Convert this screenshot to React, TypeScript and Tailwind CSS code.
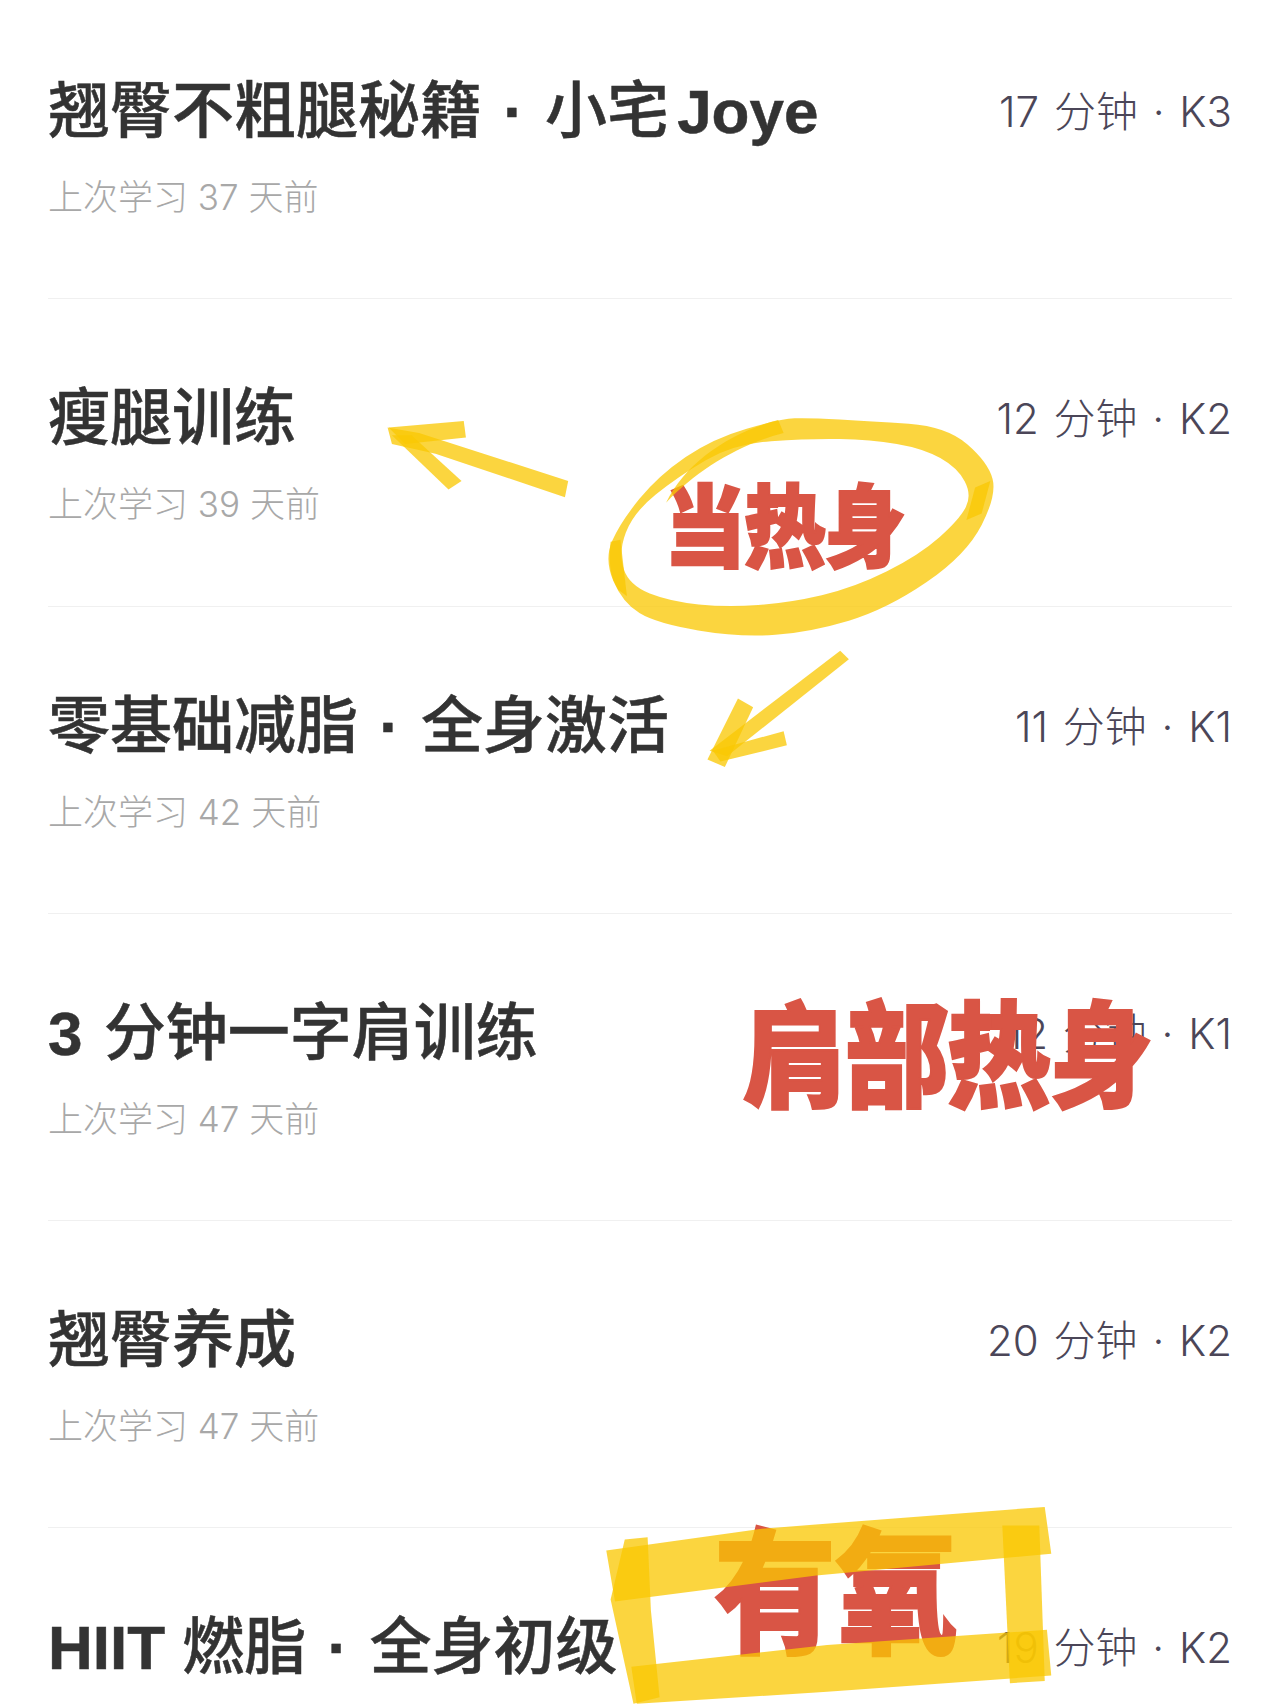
import React from 'react';

const Dot = () => <span className="mx-1 font-bold">·</span>;
const Latin = ({ children }: { children: React.ReactNode }) => <span className="font-bold">{children}</span>;

const rows = [
  {
    title: <>翘臀不粗腿秘籍 <Dot /> 小宅<span className="ml-2"><Latin>Joye</Latin></span></>,
    last: '上次学习 37 天前',
    meta: '17 分钟 · K3',
  },
  { title: <>瘦腿训练</>, last: '上次学习 39 天前', meta: '12 分钟 · K2' },
  { title: <>零基础减脂 <Dot /> 全身激活</>, last: '上次学习 42 天前', meta: '11 分钟 · K1' },
  { title: <><span className="mr-1"><Latin>3</Latin></span> 分钟一字肩训练</>, last: '上次学习 47 天前', meta: '12 分钟 · K1' },
  { title: <>翘臀养成</>, last: '上次学习 47 天前', meta: '20 分钟 · K2' },
  { title: <><Latin>HIIT</Latin> 燃脂 <Dot /> 全身初级</>, last: '上次学习 47 天前', meta: '19 分钟 · K2' },
];

const labelFont =
  "font-['Noto_Sans_CJK_SC',sans-serif] font-black text-[#d95545] leading-none whitespace-nowrap origin-bottom [-webkit-text-stroke:2px_#d95545]";

// closed smooth outline through the points
const smooth = (pts: number[][]) => {
  const mid = (a: number[], b: number[]) => [(a[0] + b[0]) / 2, (a[1] + b[1]) / 2];
  const start = mid(pts[pts.length - 1], pts[0]);
  let d = `M${start[0]} ${start[1]}`;
  pts.forEach((p, i) => {
    const m = mid(p, pts[(i + 1) % pts.length]);
    d += ` Q${p[0]} ${p[1]} ${m[0]} ${m[1]}`;
  });
  return d + ' Z';
};

const ringOuter = [
  [717, 385], [655, 403], [605, 437], [570, 480], [555, 514], [572, 554], [603, 573], [680, 586],
  [745, 581], [815, 560], [888, 510], [916, 455], [908, 425], [870, 392], [800, 387], [743, 384],
];
const ringInner = [
  [674, 408], [623, 438], [582, 471], [568, 508], [578, 538], [616, 553], [668, 558], [725, 554],
  [785, 540], [845, 510], [882, 477], [893, 455], [880, 430], [848, 412], [800, 404], [743, 403],
];

// marker scribbles drawn over the list, coordinates follow the shrunk 1176 wide picture
const Marker = () => (
  <svg className="absolute left-0 top-0 pointer-events-none" width="1280" height="1706" viewBox="0 0 1176 1568">
    <g fill="#fac803" fillOpacity="0.76">
      {/* left arrow */}
      <path d="M356 393 L385 398 L522 442 L519 457 L400 417 L360 408 Z" />
      <path d="M357 393 L426 387 L428 402 L372 408 Z" />
      <path d="M360 400 L378 400 L424 442 L412 450 Z" />
      {/* ring */}
      <path fillRule="evenodd" d={`${smooth(ringOuter)} ${smooth(ringInner)}`} />
      <path d="M715 386 L720 398 C680 408 640 432 612 462 C630 425 670 398 715 386 Z" />
      <path d="M561 498 L570 496 L576 548 L568 542 C560 530 559 515 561 498 Z" />
      <path d="M896 448 L910 442 L902 472 L888 478 Z" />
      {/* down arrow */}
      <path d="M772 598 L780 606 L668 695 L652 690 Z" />
      <path d="M678 642 L692 650 L666 705 L650 698 Z" />
      <path d="M655 690 L720 672 L723 685 L662 700 Z" />
      {/* box */}
      <path d="M557 1425 L700 1405 L960 1385 L966 1428 L750 1448 L565 1472 Z" />
      <path d="M580 1532 L760 1512 L962 1498 L966 1540 L760 1555 L585 1566 Z" />
      <path d="M574 1415 L595 1413 L598 1480 L606 1560 L582 1566 L561 1470 Z" />
      <path d="M921 1402 L955 1402 L960 1545 L928 1547 Z" />
    </g>
  </svg>
);

export default function App() {
  return (
    <div className="relative w-[1280px] h-[1706px] overflow-hidden bg-white font-['Liberation_Sans','Noto_Sans_CJK_SC',sans-serif]">
      <div className="-mt-2 px-12">
        {rows.map((row, i) => (
          <div key={i} className="h-[307.3px] border-b border-[#f0f0f0] pt-[85px]">
            <div className="flex items-center justify-between h-[70px]">
              <div className="text-[62px] leading-none font-medium text-[#333333] whitespace-nowrap [-webkit-text-stroke:0.5px_#333333]">
                {row.title}
              </div>
              <div className="text-[42px] leading-none text-[#4b4658] whitespace-nowrap font-['Inter','Noto_Sans_CJK_SC',sans-serif] font-light [word-spacing:3px]">
                {row.meta}
              </div>
            </div>
            <div className="mt-[33px] text-[35px] leading-none text-[#a8a8a8] font-['Inter','Noto_Sans_CJK_SC',sans-serif] font-light">
              {row.last}
            </div>
          </div>
        ))}
      </div>

      <div className={`absolute left-[664px] top-[485px] text-[82px] tracking-[-2px] scale-y-110 ${labelFont}`}>当热身</div>
      <div className={`absolute left-[743px] top-[1002px] text-[104px] tracking-[-2px] scale-y-110 ${labelFont}`}>肩部热身</div>
      <div className={`absolute left-[714px] top-[1530px] text-[122px] scale-y-[1.12] ${labelFont}`}>有氧</div>
      <Marker />
    </div>
  );
}
